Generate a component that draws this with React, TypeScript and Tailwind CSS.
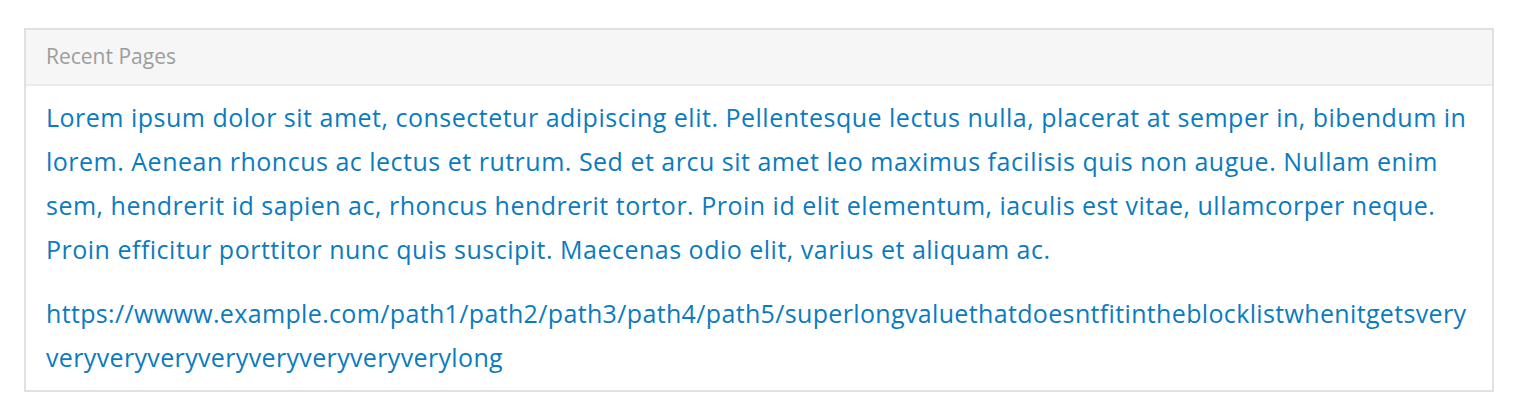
import React from "react";

export default function App() {
  return (
    <div className="min-h-[412px] bg-white pt-[28px] pl-[24px]" style={{ fontFamily: '"Open Sans", "Liberation Sans", sans-serif' }}>
      <div className="w-[1470px] border-2 border-[#e1e1e1]">
        {/* header */}
        <div className="h-[56px] flex items-center px-[20px] bg-[#f6f6f6] border-b-2 border-[#ebebeb] text-[21px] text-[#9d9d9d]">
          Recent Pages
        </div>

        {/* list */}
        <div className="px-[20px] pt-[9px] pb-[11px] text-[25px] leading-[44px] text-[#0b7bbf]">
          <p className="tracking-[0.5px]">
            Lorem ipsum dolor sit amet, consectetur adipiscing elit. Pellentesque lectus nulla, placerat at semper in, bibendum in lorem. Aenean rhoncus ac lectus et rutrum. Sed et arcu sit amet leo maximus facilisis quis non augue. Nullam enim sem, hendrerit id sapien ac, rhoncus hendrerit tortor. Proin id elit elementum, iaculis est vitae, ullamcorper neque. Proin efficitur porttitor nunc quis suscipit. Maecenas odio elit, varius et aliquam ac.
          </p>
          <p className="mt-[20px] break-words tracking-[0.35px]">
            https://wwww.example.com/path1/path2/path3/path4/path5/superlongvaluethatdoesntfitintheblocklistwhenitgetsvery<wbr />veryveryveryveryveryveryveryverylong
          </p>
        </div>
      </div>
    </div>
  );
}
